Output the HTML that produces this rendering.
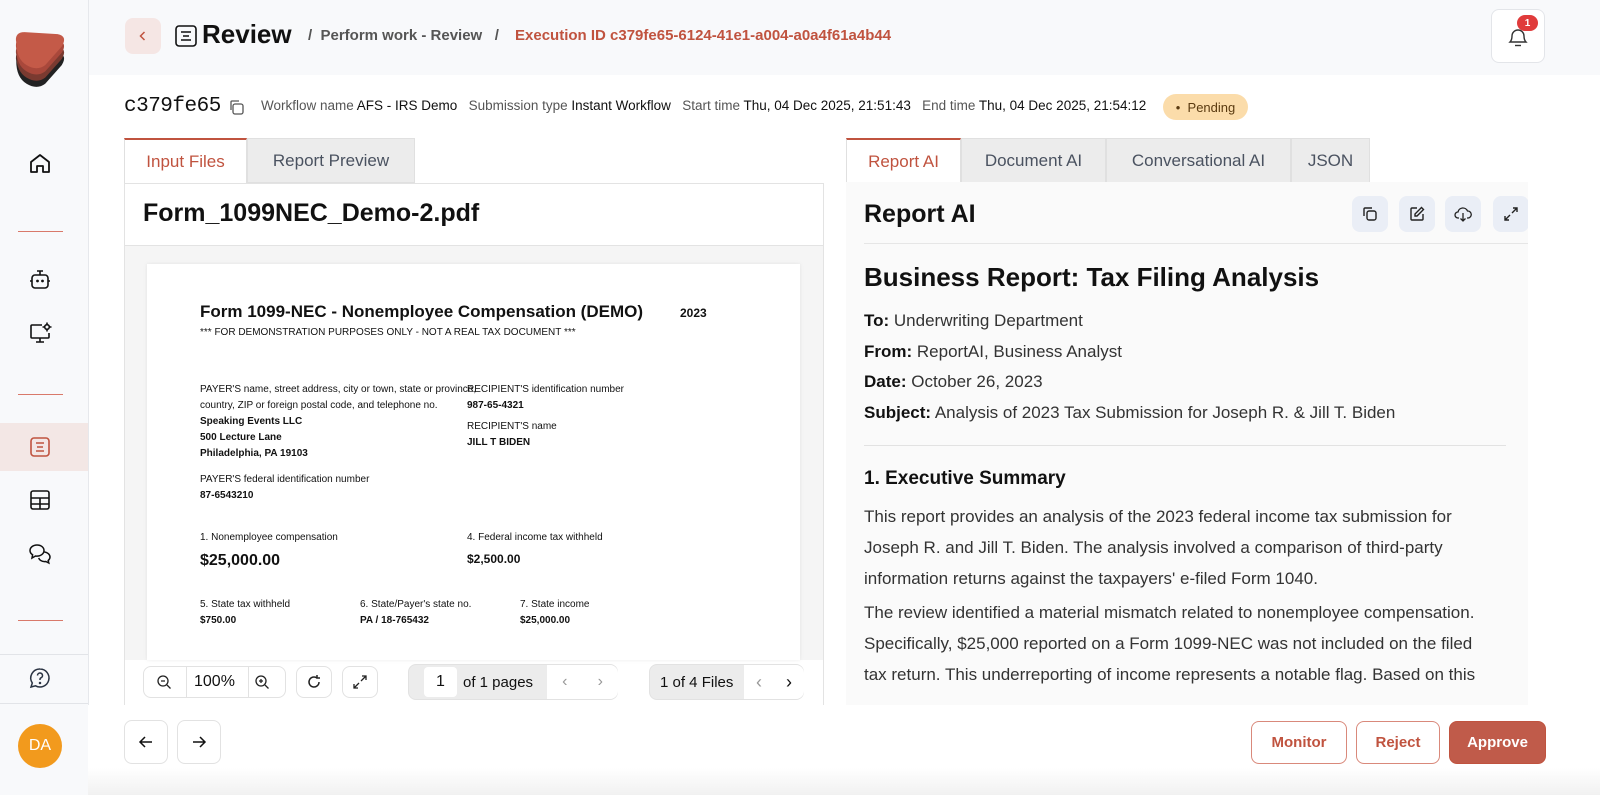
<!DOCTYPE html>
<html><head><meta charset="utf-8"><style>
*{box-sizing:border-box;margin:0;padding:0}
body{width:1600px;height:795px;overflow:hidden;font-family:"Liberation Sans",sans-serif;background:#fff;position:relative;color:#111}
.abs{position:absolute}
.side{left:0;top:0;width:89px;height:795px;background:#f8f9fb;border-right:1px solid #e6e8ec}
.hdr{left:89px;top:0;width:1511px;height:75px;background:#f8f9fb}
.red{color:#c0533f}
.tab{position:absolute;top:0;height:45px;display:flex;align-items:center;justify-content:center;font-size:17px;color:#4a5260;background:#ececec;border:1px solid #e0e0e0}
.tab.on{background:#fff;color:#c0533f;border-top:2px solid #c0533f;border-bottom:none}
.ib{position:absolute;width:36px;height:36px;border-radius:8px;background:#eaeef6;display:flex;align-items:center;justify-content:center}
.btn{position:absolute;border:1px solid #e2e2e2;border-radius:8px;background:#fff;display:flex;align-items:center;justify-content:center}
.rp p{position:absolute;left:18px;font-size:17px;color:#333;white-space:nowrap}
.rp b{color:#111}
.pdf div{position:absolute;white-space:nowrap;font-family:"Liberation Sans",sans-serif}
svg{display:block}
</style></head><body>
<div class="abs side"></div>
<!-- logo -->
<svg class="abs" style="left:10px;top:30px" width="58" height="60" viewBox="0 0 56 58">
<path d="M6 30 Q4 20 14 20 L46 22 Q56 24 50 34 L34 52 Q26 58 16 52 Q6 46 6 30Z" fill="#222"/>
<path d="M6 24 Q4 14 14 14 L46 16 Q56 18 50 28 L34 46 Q26 52 16 46 Q6 40 6 24Z" fill="#7a3a30"/>
<path d="M6 18 Q4 8 14 8 L46 10 Q56 12 50 22 L34 40 Q26 46 16 40 Q6 34 6 18Z" fill="#a9483b"/>
<path d="M6 12 Q4 2 14 2 L46 4 Q56 6 50 16 L34 34 Q26 40 16 34 Q6 28 6 12Z" fill="#c45a48"/>
</svg>
<svg class="abs" style="left:28px;top:152px" width="24" height="24" viewBox="0 0 24 24" fill="none" stroke="#111" stroke-width="1.8"><path d="M3 10 L12 3 L21 10 V20 H15 V14 H9 V20 H3Z" stroke-linejoin="round"/></svg>
<div class="abs" style="left:18px;top:231px;width:45px;height:1px;background:#d9796a"></div>
<svg class="abs" style="left:28px;top:268px" width="24" height="24" viewBox="0 0 24 24" fill="none" stroke="#111" stroke-width="1.6"><rect x="4" y="7" width="16" height="13" rx="3"/><path d="M12 7V3M9 3h6M2 13h2M20 13h2"/><circle cx="9.5" cy="13" r=".6" fill="#111"/><circle cx="14.5" cy="13" r=".6" fill="#111"/></svg>
<svg class="abs" style="left:28px;top:321px" width="24" height="24" viewBox="0 0 24 24" fill="none" stroke="#111" stroke-width="1.6"><path d="M14 4H4a1 1 0 0 0-1 1v11a1 1 0 0 0 1 1h16a1 1 0 0 0 1-1v-4M12 17v4M8 21h8"/><circle cx="19" cy="6" r="2.3"/><path d="M19 1.5v1.5M19 9v1.5M14.5 6h1.5M22 6h1.5"/></svg>
<div class="abs" style="left:18px;top:394px;width:45px;height:1px;background:#d9796a"></div>
<div class="abs" style="left:0;top:423px;width:88px;height:48px;background:#f3e7e5"></div>
<svg class="abs" style="left:28px;top:435px" width="24" height="24" viewBox="0 0 24 24" fill="none" stroke="#c0533f" stroke-width="1.6"><rect x="3" y="3" width="18" height="18" rx="3"/><path d="M8 8h8M9 12h6M8 16h8"/></svg>
<svg class="abs" style="left:28px;top:488px" width="24" height="24" viewBox="0 0 24 24" fill="none" stroke="#111" stroke-width="1.6"><rect x="3" y="3" width="18" height="18" rx="2"/><path d="M3 10h18M3 16h18M12 10v11"/></svg>
<svg class="abs" style="left:27px;top:541px" width="26" height="26" viewBox="0 0 26 26" fill="none" stroke="#111" stroke-width="1.5"><path d="M10 4c-4 0-7 2.5-7 5.5 0 1.8 1 3.3 2.6 4.3L5 17l3.5-2c.5.1 1 .1 1.5.1 4 0 7-2.5 7-5.6S14 4 10 4z"/><path d="M17.5 11c3 .3 5.5 2.4 5.5 5 0 1.4-.7 2.6-1.8 3.5l.6 2.5-3-1.5c-.4.1-.8.1-1.3.1-2.8 0-5.2-1.6-5.8-3.7"/></svg>
<div class="abs" style="left:18px;top:620px;width:45px;height:1px;background:#d9796a"></div>
<div class="abs" style="left:0;top:654px;width:88px;height:1px;background:#e2e4e8"></div>
<svg class="abs" style="left:28px;top:666px" width="24" height="24" viewBox="0 0 24 24" fill="none" stroke="#2a3342" stroke-width="1.5"><path d="M12 3a9 9 0 1 1-4.5 16.8L3 21l1.3-4A9 9 0 0 1 12 3z"/><path d="M9.5 9.5a2.5 2.5 0 1 1 3.5 2.3c-.7.3-1 .8-1 1.5v.7"/><circle cx="12" cy="17" r=".5" fill="#2a3342"/></svg>
<div class="abs" style="left:0;top:703px;width:88px;height:1px;background:#e2e4e8"></div>
<div class="abs" style="left:18px;top:724px;width:44px;height:44px;border-radius:50%;background:#f29a1d;color:#fff;font-size:16px;display:flex;align-items:center;justify-content:center">DA</div>

<div class="abs hdr"></div>
<div class="abs" style="left:125px;top:18px;width:36px;height:36px;border-radius:8px;background:#f5e6e4;display:flex;align-items:center;justify-content:center"><svg width="12" height="12" viewBox="0 0 12 12"><path d="M7.5 2L3.5 6l4 4" fill="none" stroke="#c0533f" stroke-width="1.5"/></svg></div>
<svg class="abs" style="left:175px;top:25px" width="22" height="22" viewBox="0 0 22 22" fill="none" stroke="#111" stroke-width="1.6"><rect x="1" y="1" width="20" height="20" rx="3"/><path d="M6 7h10M8 11h6M6 15h10"/></svg>
<div class="abs" style="left:202px;top:19px;font-size:26px;font-weight:bold">Review</div>
<div class="abs" style="left:308px;top:27px;font-size:15px;color:#555;font-weight:bold">/&nbsp; Perform work - Review &nbsp;&nbsp;/</div>
<div class="abs red" style="left:515px;top:27px;font-size:15px;font-weight:bold">Execution ID c379fe65-6124-41e1-a004-a0a4f61a4b44</div>
<div class="abs" style="left:1491px;top:9px;width:54px;height:54px;border:1px solid #e3e5e9;border-radius:8px;background:#fff"></div>
<svg class="abs" style="left:1505px;top:22px" width="26" height="28" viewBox="0 0 26 28" fill="none" stroke="#333" stroke-width="1.4"><path d="M5 20c1.5-1.5 2-3 2-6a6 6 0 0 1 12 0c0 3 .5 4.5 2 6z"/><path d="M10 23.5h6"/></svg>
<div class="abs" style="left:1517px;top:15px;width:21px;height:16px;border-radius:8px;background:#e03b3b;color:#fff;font-size:10px;font-weight:bold;display:flex;align-items:center;justify-content:center">1</div>

<!-- meta row -->
<div class="abs" style="left:124px;top:95px;font-size:21px;font-family:'Liberation Mono',monospace;letter-spacing:-0.5px">c379fe65</div>
<svg class="abs" style="left:228px;top:99px" width="16" height="16" viewBox="0 0 16 16" fill="none" stroke="#555" stroke-width="1.3"><rect x="5" y="5" width="10" height="10" rx="2"/><path d="M3 11V3a1 1 0 0 1 1-1h7"/></svg>
<div class="abs" style="left:261px;top:98px;font-size:13.5px;color:#555;white-space:nowrap">Workflow name <span style="color:#111">AFS - IRS Demo</span> &nbsp; Submission type <span style="color:#111">Instant Workflow</span> &nbsp; Start time <span style="color:#111">Thu, 04 Dec 2025, 21:51:43</span> &nbsp; End time <span style="color:#111">Thu, 04 Dec 2025, 21:54:12</span></div>
<div class="abs" style="left:1163px;top:94px;width:85px;height:26px;border-radius:13px;background:#fbdcaa;font-size:13px;color:#5a3a10;display:flex;align-items:center;justify-content:center">•&nbsp; Pending</div>

<!-- left panel -->
<div class="abs" style="left:124px;top:138px;width:291px;height:46px">
<div class="tab on" style="left:0;width:123px">Input Files</div>
<div class="tab" style="left:123px;width:168px">Report Preview</div></div>
<div class="abs" style="left:124px;top:183px;width:700px;height:523px;border:1px solid #e3e3e3;background:#fff"></div>
<div class="abs" style="left:143px;top:199px;font-size:25px;font-weight:bold">Form_1099NEC_Demo-2.pdf</div>
<div class="abs" style="left:125px;top:245px;width:698px;height:415px;background:#f5f5f5;border-top:1px solid #e3e3e3"></div>
<div class="abs pdf" style="left:147px;top:264px;width:653px;height:396px;background:#fff;box-shadow:0 0 4px rgba(0,0,0,.08)">
<div style="left:53px;top:38px;font-size:17px;font-weight:bold">Form 1099-NEC - Nonemployee Compensation (DEMO)</div>
<div style="left:533px;top:42px;font-size:12px;font-weight:bold">2023</div>
<div style="left:53px;top:63px;font-size:10px">*** FOR DEMONSTRATION PURPOSES ONLY - NOT A REAL TAX DOCUMENT ***</div>
<div style="left:53px;top:118px;font-size:10px;line-height:16px">PAYER'S name, street address, city or town, state or province,<br>country, ZIP or foreign postal code, and telephone no.<br><b>Speaking Events LLC</b><br><b>500 Lecture Lane</b><br><b>Philadelphia, PA 19103</b></div>
<div style="left:320px;top:118px;font-size:10px;line-height:16px">RECIPIENT'S identification number<br><b>987-65-4321</b></div>
<div style="left:320px;top:155px;font-size:10px;line-height:16px">RECIPIENT'S name<br><b>JILL T BIDEN</b></div>
<div style="left:53px;top:208px;font-size:10px;line-height:16px">PAYER'S federal identification number<br><b>87-6543210</b></div>
<div style="left:53px;top:268px;font-size:10px">1. Nonemployee compensation</div>
<div style="left:53px;top:288px;font-size:16px;font-weight:bold">$25,000.00</div>
<div style="left:320px;top:268px;font-size:10px">4. Federal income tax withheld</div>
<div style="left:320px;top:288px;font-size:12px;font-weight:bold">$2,500.00</div>
<div style="left:53px;top:333px;font-size:10px;line-height:16px">5. State tax withheld<br><b>$750.00</b></div>
<div style="left:213px;top:333px;font-size:10px;line-height:16px">6. State/Payer's state no.<br><b>PA / 18-765432</b></div>
<div style="left:373px;top:333px;font-size:10px;line-height:16px">7. State income<br><b>$25,000.00</b></div>
</div>
<!-- toolbar -->
<div class="btn" style="left:143px;top:666px;width:143px;height:32px;justify-content:flex-start">
<svg style="margin-left:12px" width="16" height="16" viewBox="0 0 16 16" fill="none" stroke="#222" stroke-width="1.3"><circle cx="7" cy="7" r="5"/><path d="M11 11l3.5 3.5M5 7h4"/></svg>
<div style="position:absolute;left:42px;top:0;width:1px;height:30px;background:#e2e2e2"></div>
<span style="margin-left:22px;font-size:16px">100%</span>
<div style="position:absolute;left:104px;top:0;width:1px;height:30px;background:#e2e2e2"></div>
<svg style="margin-left:19px" width="16" height="16" viewBox="0 0 16 16" fill="none" stroke="#222" stroke-width="1.3"><circle cx="7" cy="7" r="5"/><path d="M11 11l3.5 3.5M5 7h4M7 5v4"/></svg></div>
<div class="btn" style="left:296px;top:666px;width:36px;height:32px"><svg width="16" height="16" viewBox="0 0 16 16" fill="none" stroke="#222" stroke-width="1.5"><path d="M13 8a5 5 0 1 1-2-4M11 1v3h3"/></svg></div>
<div class="btn" style="left:342px;top:666px;width:36px;height:32px"><svg width="16" height="16" viewBox="0 0 16 16" fill="none" stroke="#222" stroke-width="1.3"><path d="M9 7l5-5M10 2h4v4M7 9l-5 5M2 10v4h4"/></svg></div>
<div class="btn" style="left:408px;top:664px;width:210px;height:36px;background:#ececec;justify-content:flex-start">
<div style="margin-left:15px;width:33px;height:30px;background:#fff;border-radius:4px;display:flex;align-items:center;justify-content:center;font-size:16px">1</div>
<span style="margin-left:6px;font-size:15px">of 1 pages</span>
<div style="position:absolute;left:138px;top:0;width:71px;height:34px;background:#fff;border-radius:0 8px 8px 0;display:flex;align-items:center;justify-content:space-around;color:#999;font-size:16px">‹ <span>›</span></div></div>
<div class="btn" style="left:649px;top:664px;width:155px;height:36px;background:#ececec;justify-content:flex-start">
<span style="margin-left:10px;font-size:15px">1 of 4 Files</span>
<div style="position:absolute;left:94px;top:0;width:60px;height:34px;background:#fff;border-radius:0 8px 8px 0;display:flex;align-items:center;justify-content:space-around;font-size:18px"><span style="color:#999">‹</span><span>›</span></div></div>
<div class="abs" style="left:88px;top:705px;width:1512px;height:90px;background:linear-gradient(#fff,#fff 70%,#f1f1f1)"></div>
<div class="btn" style="left:124px;top:720px;width:44px;height:44px"><svg width="16" height="16" viewBox="0 0 16 16" fill="none" stroke="#111" stroke-width="1.5"><path d="M14 8H2M7 3L2 8l5 5"/></svg></div>
<div class="btn" style="left:177px;top:720px;width:44px;height:44px"><svg width="16" height="16" viewBox="0 0 16 16" fill="none" stroke="#111" stroke-width="1.5"><path d="M2 8h12M9 3l5 5-5 5"/></svg></div>

<!-- right panel -->
<div class="abs" style="left:846px;top:138px;width:524px;height:45px">
<div class="tab on" style="left:0;width:115px">Report AI</div>
<div class="tab" style="left:115px;width:145px">Document AI</div>
<div class="tab" style="left:260px;width:185px">Conversational AI</div>
<div class="tab" style="left:445px;width:79px">JSON</div></div>
<div class="abs rp" style="left:846px;top:182px;width:682px;height:523px;background:#fafafa;overflow:hidden">
<div class="abs" style="left:18px;top:18px;font-size:25px;font-weight:bold">Report AI</div>
<div class="ib" style="left:506px;top:14px"><svg width="16" height="16" viewBox="0 0 16 16" fill="none" stroke="#222" stroke-width="1.4"><rect x="5" y="5" width="9" height="9" rx="2"/><path d="M2 10V3a1 1 0 0 1 1-1h7"/></svg></div>
<div class="ib" style="left:553px;top:14px"><svg width="16" height="16" viewBox="0 0 16 16" fill="none" stroke="#222" stroke-width="1.4"><path d="M8 2H3a1 1 0 0 0-1 1v10a1 1 0 0 0 1 1h10a1 1 0 0 0 1-1V8"/><path d="M12.5 1.5l2 2L8 10H6V8z"/></svg></div>
<div class="ib" style="left:599px;top:14px"><svg width="18" height="16" viewBox="0 0 18 16" fill="none" stroke="#222" stroke-width="1.3"><path d="M5 12H4a3 3 0 0 1 0-6 5 5 0 0 1 9.5-1A3.5 3.5 0 0 1 14 12h-1M9 7v8M6.5 12.5L9 15l2.5-2.5"/></svg></div>
<div class="ib" style="left:647px;top:14px"><svg width="16" height="16" viewBox="0 0 16 16" fill="none" stroke="#222" stroke-width="1.4"><path d="M9 7l5-5M10 2h4v4M7 9l-5 5M2 10v4h4"/></svg></div>
<div class="abs" style="left:18px;top:61px;width:664px;height:1px;background:#e6e6e6"></div>
<div class="abs" style="left:18px;top:80px;font-size:26px;font-weight:bold">Business Report: Tax Filing Analysis</div>
<p style="top:129px"><b>To:</b> Underwriting Department</p>
<p style="top:160px"><b>From:</b> ReportAI, Business Analyst</p>
<p style="top:190px"><b>Date:</b> October 26, 2023</p>
<p style="top:221px"><b>Subject:</b> Analysis of 2023 Tax Submission for Joseph R. &amp; Jill T. Biden</p>
<div class="abs" style="left:18px;top:263px;width:642px;height:1px;background:#e2e2e2"></div>
<div class="abs" style="left:18px;top:286px;font-size:19px;font-weight:bold">1. Executive Summary</div>
<p style="top:325px">This report provides an analysis of the 2023 federal income tax submission for</p>
<p style="top:356px">Joseph R. and Jill T. Biden. The analysis involved a comparison of third-party</p>
<p style="top:387px">information returns against the taxpayers' e-filed Form 1040.</p>
<p style="top:421px">The review identified a material mismatch related to nonemployee compensation.</p>
<p style="top:452px">Specifically, $25,000 reported on a Form 1099-NEC was not included on the filed</p>
<p style="top:483px">tax return. This underreporting of income represents a notable flag. Based on this</p>
</div>
<div class="btn" style="left:1251px;top:721px;width:96px;height:43px;border-color:#d9897b;color:#c0533f;font-size:15px;font-weight:bold">Monitor</div>
<div class="btn" style="left:1356px;top:721px;width:84px;height:43px;border-color:#d9897b;color:#c0533f;font-size:15px;font-weight:bold">Reject</div>
<div class="btn" style="left:1449px;top:721px;width:97px;height:43px;border-color:#c0533f;background:#c05b4a;color:#fff;font-size:15px;font-weight:bold">Approve</div>
</body></html>
